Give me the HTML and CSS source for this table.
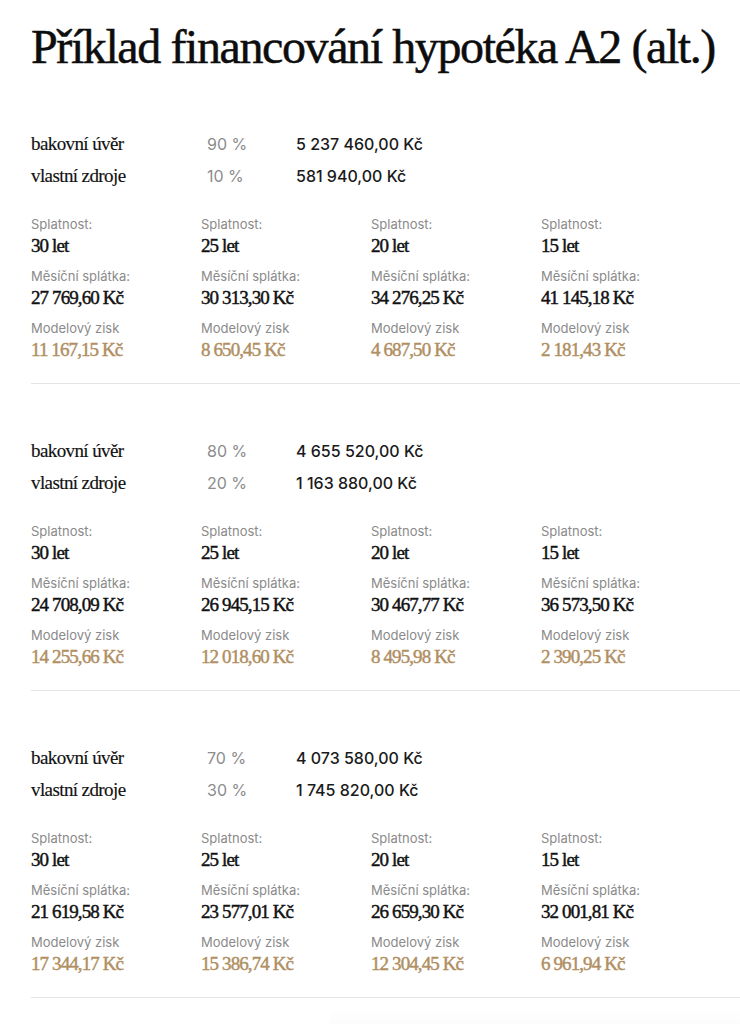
FILE: index.html
```html
<!DOCTYPE html>
<html lang="cs">
<head>
<meta charset="utf-8">
<title>Příklad financování hypotéka A2 (alt.)</title>
<link rel="stylesheet" href="styles.css">
</head>
<body>
<main class="page">
  <h1 class="title">Příklad financování hypotéka A2 (alt.)</h1>

  <section class="variant">
    <div class="summary">
      <div class="summary-row">
        <span class="summary-label">bakovní úvěr</span>
        <span class="summary-pct">90 %</span>
        <span class="summary-amount">5 237 460,00 Kč</span>
      </div>
      <div class="summary-row">
        <span class="summary-label">vlastní zdroje</span>
        <span class="summary-pct">10 %</span>
        <span class="summary-amount">581 940,00 Kč</span>
      </div>
    </div>
    <div class="terms">
      <div class="term">
        <div class="label">Splatnost:</div><div class="value">30 let</div>
        <div class="label">Měsíční splátka:</div><div class="value">27 769,60 Kč</div>
        <div class="label">Modelový zisk</div><div class="value gold">11 167,15 Kč</div>
      </div>
      <div class="term">
        <div class="label">Splatnost:</div><div class="value">25 let</div>
        <div class="label">Měsíční splátka:</div><div class="value">30 313,30 Kč</div>
        <div class="label">Modelový zisk</div><div class="value gold">8 650,45 Kč</div>
      </div>
      <div class="term">
        <div class="label">Splatnost:</div><div class="value">20 let</div>
        <div class="label">Měsíční splátka:</div><div class="value">34 276,25 Kč</div>
        <div class="label">Modelový zisk</div><div class="value gold">4 687,50 Kč</div>
      </div>
      <div class="term">
        <div class="label">Splatnost:</div><div class="value">15 let</div>
        <div class="label">Měsíční splátka:</div><div class="value">41 145,18 Kč</div>
        <div class="label">Modelový zisk</div><div class="value gold">2 181,43 Kč</div>
      </div>
    </div>
  </section>

  <section class="variant">
    <div class="summary">
      <div class="summary-row">
        <span class="summary-label">bakovní úvěr</span>
        <span class="summary-pct">80 %</span>
        <span class="summary-amount">4 655 520,00 Kč</span>
      </div>
      <div class="summary-row">
        <span class="summary-label">vlastní zdroje</span>
        <span class="summary-pct">20 %</span>
        <span class="summary-amount">1 163 880,00 Kč</span>
      </div>
    </div>
    <div class="terms">
      <div class="term">
        <div class="label">Splatnost:</div><div class="value">30 let</div>
        <div class="label">Měsíční splátka:</div><div class="value">24 708,09 Kč</div>
        <div class="label">Modelový zisk</div><div class="value gold">14 255,66 Kč</div>
      </div>
      <div class="term">
        <div class="label">Splatnost:</div><div class="value">25 let</div>
        <div class="label">Měsíční splátka:</div><div class="value">26 945,15 Kč</div>
        <div class="label">Modelový zisk</div><div class="value gold">12 018,60 Kč</div>
      </div>
      <div class="term">
        <div class="label">Splatnost:</div><div class="value">20 let</div>
        <div class="label">Měsíční splátka:</div><div class="value">30 467,77 Kč</div>
        <div class="label">Modelový zisk</div><div class="value gold">8 495,98 Kč</div>
      </div>
      <div class="term">
        <div class="label">Splatnost:</div><div class="value">15 let</div>
        <div class="label">Měsíční splátka:</div><div class="value">36 573,50 Kč</div>
        <div class="label">Modelový zisk</div><div class="value gold">2 390,25 Kč</div>
      </div>
    </div>
  </section>

  <section class="variant">
    <div class="summary">
      <div class="summary-row">
        <span class="summary-label">bakovní úvěr</span>
        <span class="summary-pct">70 %</span>
        <span class="summary-amount">4 073 580,00 Kč</span>
      </div>
      <div class="summary-row">
        <span class="summary-label">vlastní zdroje</span>
        <span class="summary-pct">30 %</span>
        <span class="summary-amount">1 745 820,00 Kč</span>
      </div>
    </div>
    <div class="terms">
      <div class="term">
        <div class="label">Splatnost:</div><div class="value">30 let</div>
        <div class="label">Měsíční splátka:</div><div class="value">21 619,58 Kč</div>
        <div class="label">Modelový zisk</div><div class="value gold">17 344,17 Kč</div>
      </div>
      <div class="term">
        <div class="label">Splatnost:</div><div class="value">25 let</div>
        <div class="label">Měsíční splátka:</div><div class="value">23 577,01 Kč</div>
        <div class="label">Modelový zisk</div><div class="value gold">15 386,74 Kč</div>
      </div>
      <div class="term">
        <div class="label">Splatnost:</div><div class="value">20 let</div>
        <div class="label">Měsíční splátka:</div><div class="value">26 659,30 Kč</div>
        <div class="label">Modelový zisk</div><div class="value gold">12 304,45 Kč</div>
      </div>
      <div class="term">
        <div class="label">Splatnost:</div><div class="value">15 let</div>
        <div class="label">Měsíční splátka:</div><div class="value">32 001,81 Kč</div>
        <div class="label">Modelový zisk</div><div class="value gold">6 961,94 Kč</div>
      </div>
    </div>
  </section>
</main>
</body>
</html>
```

FILE: styles.css
```css
html, body {
  margin: 0;
  padding: 0;
  background: #ffffff;
}

body {
  height: 1024px;
  overflow: hidden;
  color: #111111;
  background: linear-gradient(to bottom, rgba(0, 0, 0, 0) 1006px, rgba(0, 0, 0, 0.012) 1024px) no-repeat 330px 0 / 410px 1024px, #ffffff;
}

.page {
  padding: 23px 0 0 31px;
}

.title {
  margin: 0;
  font-family: "Liberation Serif", "Times New Roman", serif;
  font-weight: normal;
  font-size: 48px;
  line-height: 48px;
  letter-spacing: -1.4px;
  color: #0d0d0d;
  -webkit-text-stroke: 0.5px #0d0d0d;
  white-space: nowrap;
}

.variant {
  border-bottom: 1px solid #e4e4e4;
  padding-bottom: 20px;
  margin-top: 51px;
}

.variant:first-of-type {
  margin-top: 57px;
}

.summary-row {
  display: grid;
  grid-template-columns: 176px 89px auto;
  align-items: baseline;
  height: 32px;
  line-height: 32px;
}

.summary-label {
  font-family: "Liberation Serif", "Times New Roman", serif;
  font-size: 19px;
  letter-spacing: -0.6px;
  color: #111111;
  -webkit-text-stroke: 0.15px #111111;
}

.summary-pct {
  font-family: Inter, "Noto Sans", sans-serif;
  font-size: 16px;
  color: #8c8c8c;
}

.summary-amount {
  font-family: Inter, "Noto Sans", sans-serif;
  font-size: 16px;
  font-weight: 500;
  color: #1a1a1a;
}

.terms {
  display: grid;
  grid-template-columns: repeat(4, 170px);
  margin-top: 24px;
}

.term {
  display: flex;
  flex-direction: column;
}

.label {
  font-family: Inter, "Noto Sans", sans-serif;
  font-size: 13px;
  line-height: 16px;
  color: #8a8a8a;
}

.value {
  font-family: "Liberation Serif", "Times New Roman", serif;
  font-size: 19px;
  line-height: 27px;
  letter-spacing: -0.9px;
  color: #111111;
  -webkit-text-stroke: 0.45px #111111;
  margin-bottom: 9px;
  white-space: nowrap;
}

.value:last-child {
  margin-bottom: 0;
}

.value.gold {
  color: #b08f62;
  -webkit-text-stroke: 0.45px #b08f62;
}
```
